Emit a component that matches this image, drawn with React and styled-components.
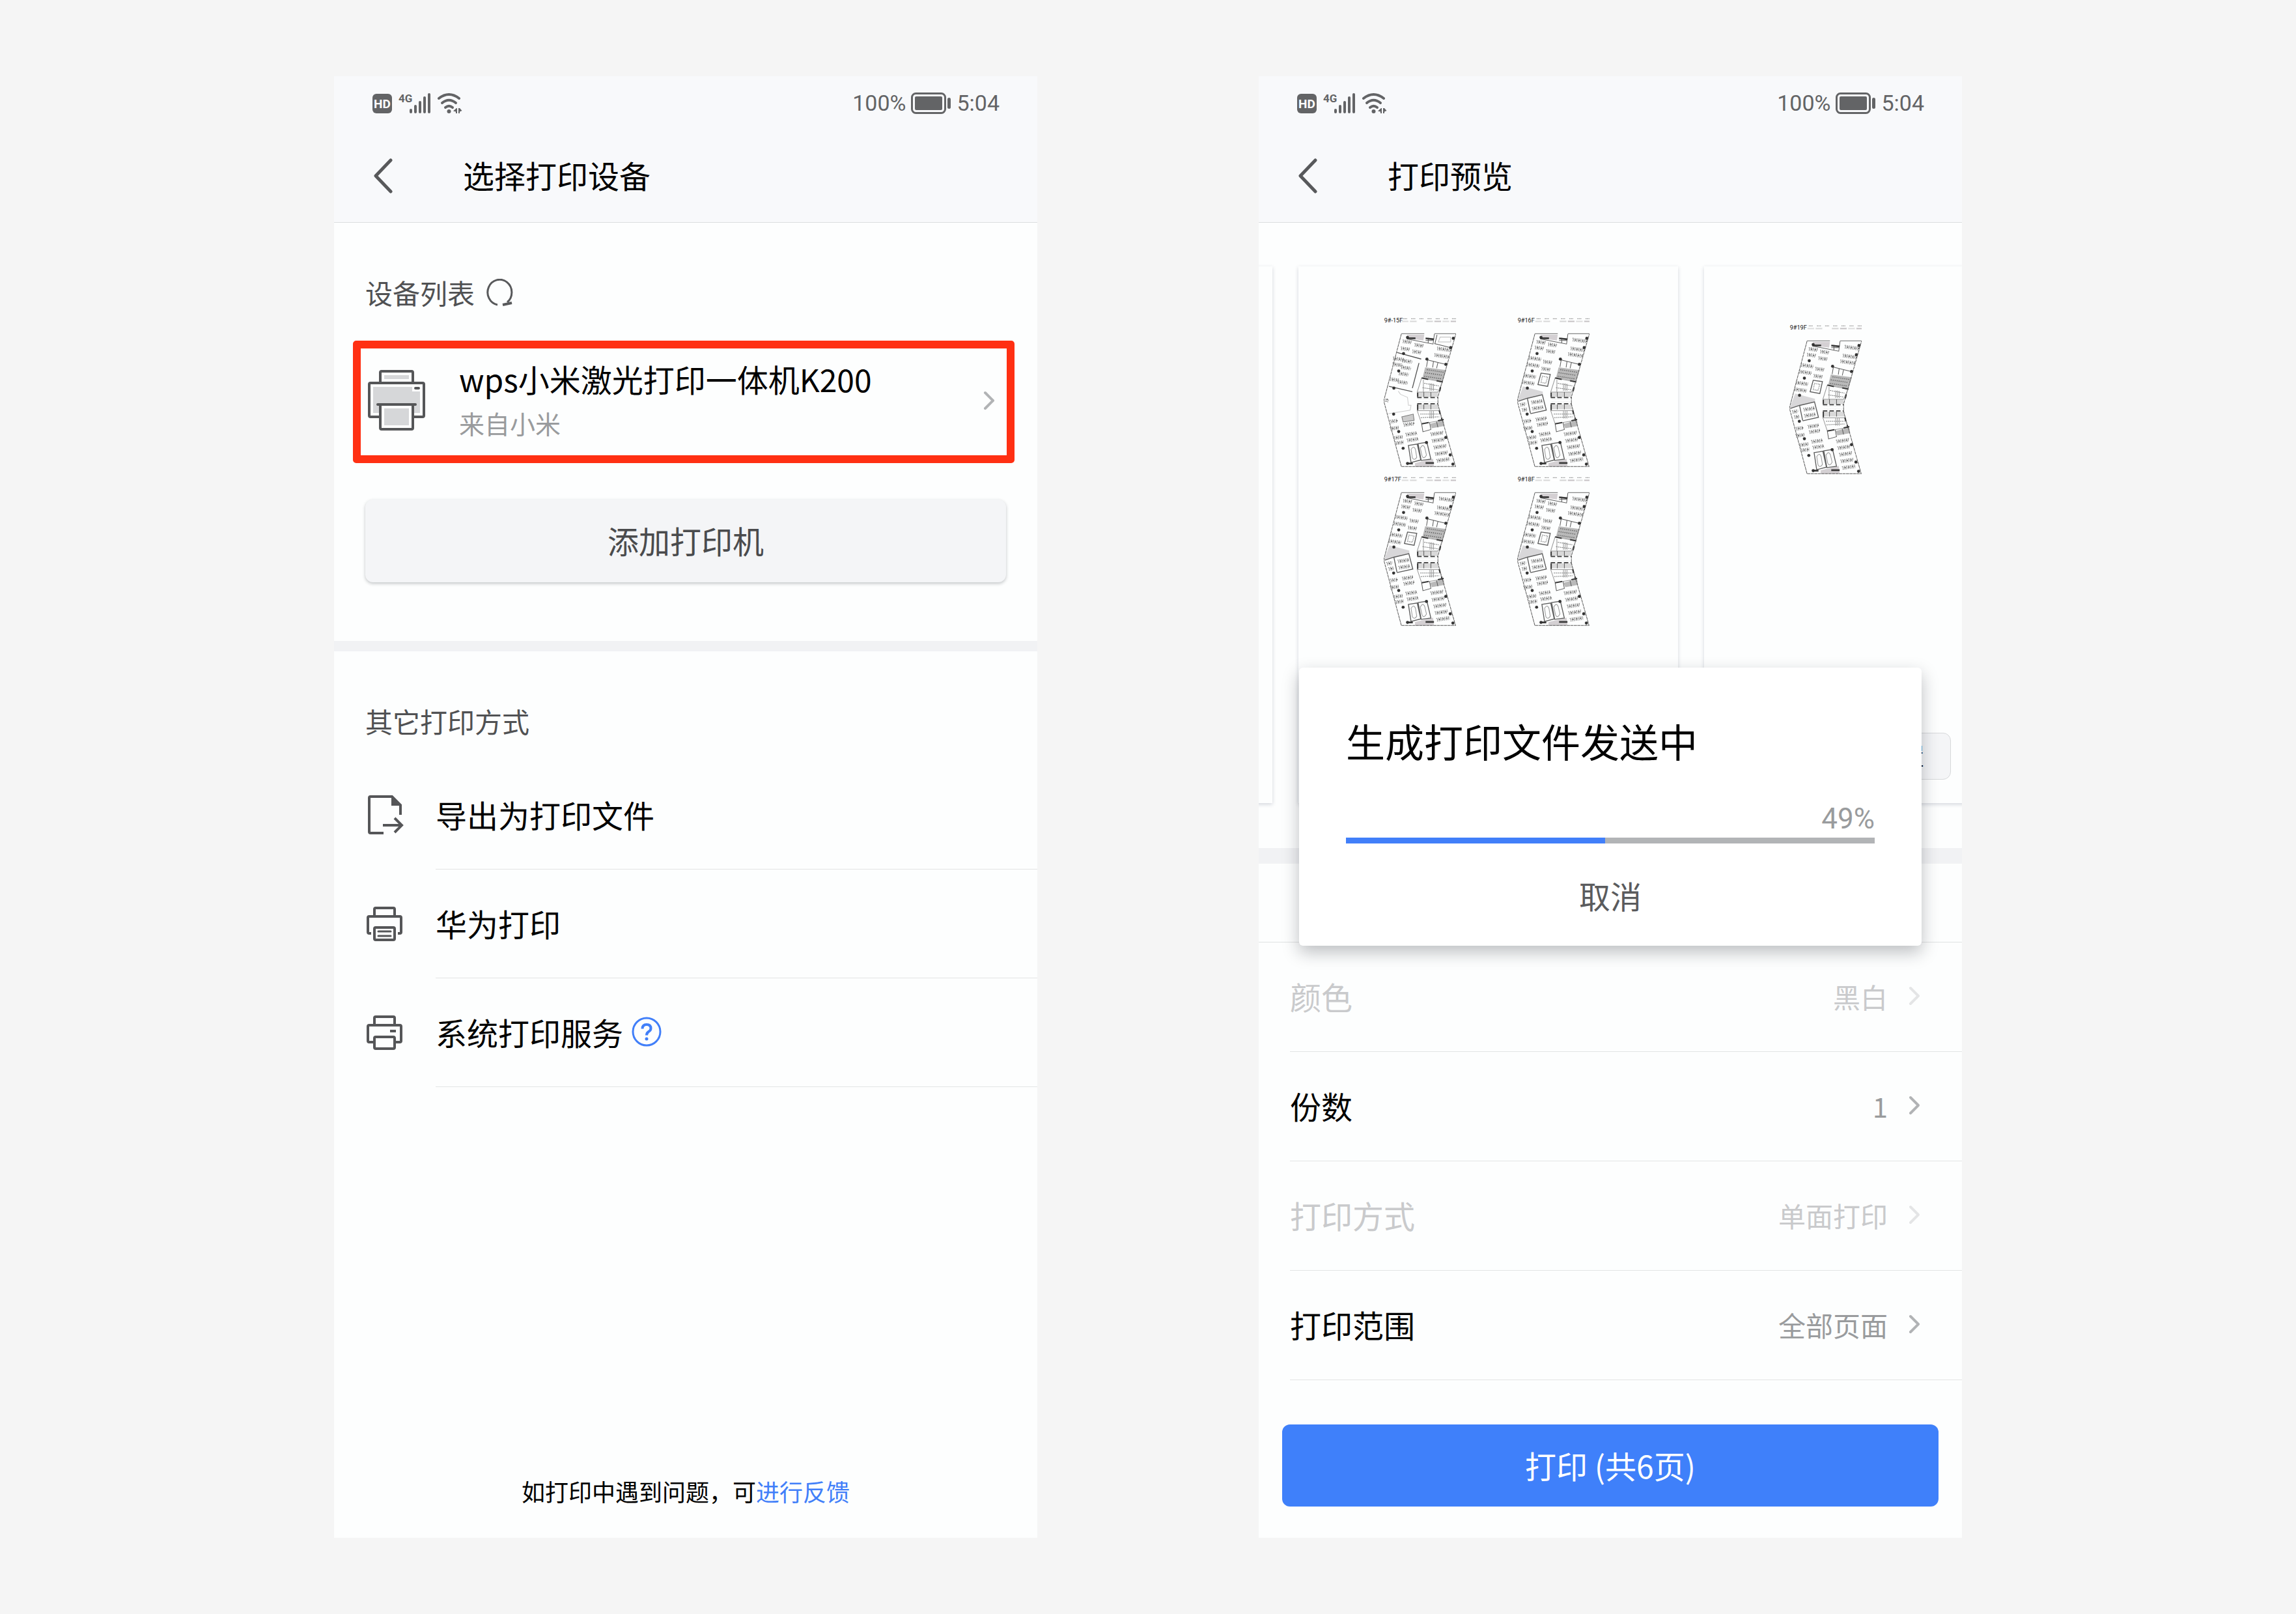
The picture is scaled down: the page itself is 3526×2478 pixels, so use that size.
import React from 'react';
import styled, { createGlobalStyle } from 'styled-components';

const GlobalStyle = createGlobalStyle`
  *, *::before, *::after {
    box-sizing: border-box;
  }

  body {
    margin: 0;
    background: #f5f5f5;
    color: #000;
    font-family: 'Noto Sans CJK SC', 'Noto Sans', sans-serif;
    font-size: 48px;
  }

  button {
    padding: 0;
    border: 0;
    background: none;
    font-family: inherit;
    cursor: pointer;
  }

  h1, h2, p, ul {
    margin: 0;
    padding: 0;
    font-weight: 400;
    list-style: none;
  }

  a {
    color: inherit;
    text-decoration: none;
  }

  svg {
    display: block;
    flex: none;
  }
`;

const Page = styled.div`
  display: flex;
  justify-content: center;
  gap: 340px;
  min-height: 100vh;
  padding: 117px 48px;
`;

const Phone = styled.section`
  position: relative;
  display: flex;
  flex: 1;
  flex-direction: column;
  min-width: 0;
  max-width: 1080px;
  background: #fdfefe;
`;

const Header = styled.header`
  border-bottom: 1px solid #dcdedf;
  background: #f8f9fb;
`;

const StatusBar = styled.div`
  display: flex;
  align-items: center;
  justify-content: space-between;
  height: 82px;
  padding: 0 58px;
  color: #636466;
  font-family: Roboto, sans-serif;
  font-size: 34px;
  line-height: 40px;
`;

const StatusGroup = styled.div`
  display: flex;
  align-items: center;
  gap: 8px;
`;

const TitleBar = styled.div`
  display: flex;
  align-items: center;
  height: 142px;
  padding: 0 48px;
`;

const BackButton = styled.button`
  display: flex;
  align-items: center;
  width: 150px;
  height: 96px;
  padding-left: 11px;
`;

const Title = styled.h1`
  padding-bottom: 4px;
  font-size: 48px;
  line-height: 68px;
`;

const SectionTitle = styled.h2`
  display: flex;
  align-items: center;
  gap: 18px;
  padding: 77px 48px 0;
  color: #505153;
  font-size: 42px;
  line-height: 60px;
`;

const DeviceCard = styled.a`
  display: flex;
  align-items: center;
  margin: 44px 35px 56px 29px;
  padding: 12px 18px 16px 11px;
  border: 12px solid #ff3013;
  border-radius: 5px;
`;

const DeviceText = styled.div`
  flex: 1;
  padding-left: 51px;
  line-height: 68px;
`;

const DeviceSource = styled.p`
  color: #999b9d;
  font-size: 39px;
`;

const AddButton = styled.button`
  height: 127px;
  margin: 0 48px 90px;
  padding-bottom: 4px;
  border-radius: 12px;
  background: #f4f5f7;
  box-shadow: 0 2px 5px rgba(40, 45, 55, 0.28);
  color: #4a4b4d;
  font-size: 48px;
`;

const Divider = styled.div`
  height: ${(props) => (props.$wide ? '24px' : '16px')};
  background: #f1f2f4;
`;

const MethodList = styled.ul`
  padding-top: 31px;
`;

const Method = styled.li`
  display: flex;
  align-items: center;
  padding-left: 48px;
`;

const MethodIcon = styled.div`
  width: 108px;
  padding-bottom: 2px;
`;

const MethodBody = styled.div`
  display: flex;
  flex: 1;
  align-items: center;
  gap: 13px;
  height: 167px;
  padding-bottom: 2px;
  border-bottom: 1px solid #e3e5e5;
`;

const Feedback = styled.p`
  margin-top: auto;
  padding-bottom: 48px;
  font-size: 36px;
  line-height: 48px;
  text-align: center;

  a {
    color: #417ff9;
  }
`;

const Preview = styled.div`
  position: relative;
  padding: 67px 0 69px;
`;

const PageStrip = styled.div`
  overflow: hidden;
  margin: -20px 0;
  padding: 20px 0;
`;

/* scrolled so the second sheet is in view */
const Sheets = styled.div`
  display: flex;
  gap: 40px;
  margin-left: -562px;
`;

const Sheet = styled.div`
  display: grid;
  flex: none;
  grid-template-columns: repeat(2, 111px);
  align-content: start;
  gap: 14px 94px;
  width: 583px;
  height: 824px;
  padding: ${(props) => (props.$short ? '89px' : '78px')} 0 0 131px;
  background: #fdfefe;
  box-shadow: 0 2px 6px rgba(40, 50, 80, 0.2);
`;

const SheetSetup = styled.button`
  position: absolute;
  right: 17px;
  bottom: 105px;
  height: 72px;
  padding: 0 40px 4px;
  border: 1px solid #d6d8da;
  border-radius: 12px;
  background: #f4f5f7;
  font-size: 36px;
`;

const SettingsHeading = styled.h2`
  height: 121px;
  padding: 30px 72px;
  border-bottom: 1px solid #e0e2e2;
  color: #505153;
  font-size: 42px;
  line-height: 60px;
`;

const Setting = styled.button`
  display: flex;
  align-items: center;
  width: calc(100% - 48px);
  height: 168px;
  margin-left: 48px;
  padding: 0 64px 3px 0;
  border-bottom: 1px solid #e3e5e5;
  color: #000;
  font-size: 48px;
  text-align: left;

  &:disabled {
    color: #c9cacc;
    cursor: default;
  }
`;

const SettingValue = styled.span`
  flex: 1;
  padding-right: 32px;
  color: ${(props) => (props.$muted ? '#c9cacc' : '#999b9d')};
  font-size: 42px;
  text-align: right;
`;

const PrintButton = styled.button`
  height: 126px;
  margin: auto 36px 48px;
  padding-bottom: 3px;
  border-radius: 12px;
  background: #3f80fa;
  color: #fff;
  font-size: 48px;
`;

const Dialog = styled.div`
  position: absolute;
  top: 908px;
  right: 62px;
  left: 62px;
  display: flex;
  flex-direction: column;
  padding: 72px 72px 30px;
  border-radius: 6px;
  background: #fff;
  box-shadow: 0 10px 26px rgba(20, 25, 35, 0.28);
`;

const DialogTitle = styled.h2`
  font-size: 60px;
  line-height: 80px;
`;

const Percent = styled.span`
  margin: 56px 0 5px;
  color: #999b9d;
  font-family: Roboto, sans-serif;
  font-size: 44px;
  line-height: 48px;
  text-align: right;
`;

const Track = styled.div`
  height: 9px;
  background: #b2b4b6;
`;

const Fill = styled.div`
  height: 100%;
  background: #417ff9;
`;

const CancelButton = styled.button`
  align-self: center;
  height: 96px;
  margin-top: 31px;
  padding: 0 48px;
  color: #5a5b5d;
  font-size: 48px;
`;

const HelpButton = styled.button`
  border-radius: 50%;
`;

const SignalIcons = () => (
  <svg width="140" height="34" viewBox="0 0 140 34" fill="#636466">
    <rect x="1" y="3" width="30" height="30" rx="6" />
    <text x="16" y="25" textAnchor="middle" fill="#fff" fontFamily="Roboto" fontWeight="700" fontSize="19">
      HD
    </text>
    <text x="41" y="16" fontFamily="Liberation Sans Narrow, Roboto" fontWeight="700" fontSize="17">
      4G
    </text>
    <rect x="58" y="26" width="4" height="7" rx="2" />
    <rect x="65" y="20" width="4" height="13" rx="2" />
    <rect x="72" y="14" width="4" height="19" rx="2" />
    <rect x="79" y="7" width="4" height="26" rx="2" />
    <rect x="86" y="2" width="4" height="31" rx="2" />
    <g fill="none" stroke="#636466" strokeWidth="4" strokeLinecap="round">
      <path d="M103 10 Q118.5 -2 134 10" />
      <path d="M108 17 Q118.5 8.5 129 17" />
      <path d="M113 24 Q118.5 19.5 124 24" />
    </g>
    <circle cx="118.5" cy="30" r="3" />
    <path d="M125 29.5 L130 25 H131 V33 H129 V30.5 Z M133 25 H135 L138.5 29 L135 30.5 V33 H133 Z" />
  </svg>
);

const Battery = () => (
  <svg width="62" height="34" viewBox="0 0 62 34" fill="#636466">
    <rect x="1.5" y="2.5" width="51" height="30" rx="6" fill="none" stroke="#636466" strokeWidth="3" />
    <rect x="6" y="7" width="42" height="21" rx="2" />
    <rect x="56" y="9" width="5" height="17" rx="2.5" />
  </svg>
);

const BackIcon = () => (
  <svg width="32" height="54" viewBox="0 0 32 54" fill="none" stroke="#58595b" strokeWidth="5">
    <path d="M28 3 L5 27 L28 51" strokeLinecap="round" strokeLinejoin="round" />
  </svg>
);

const Chevron = ({ color = '#b1b3b5' }) => (
  <svg width="18" height="30" viewBox="0 0 18 30" fill="none" stroke={color} strokeWidth="4">
    <path d="M3 3 L15 15 L3 27" strokeLinecap="round" strokeLinejoin="round" />
  </svg>
);

const RefreshIcon = () => (
  <svg width="42" height="42" viewBox="0 0 42 42" fill="none" stroke="#58595b" strokeWidth="3">
    <path d="M17 40 A18.5 19.5 0 1 1 32 36" />
    <path d="M25 40 L39 37" strokeWidth="4" />
  </svg>
);

const DeviceIcon = () => (
  <svg width="89" height="94" viewBox="0 0 89 94" fill="#d6d7d9">
    <path d="M25 8h38v6H25z" />
    <path d="M8 26h60v7h12v33H8z" />
    <g stroke="#555658" strokeWidth="4" strokeLinejoin="round" strokeLinecap="round">
      <path d="M19 20 V4 Q19 2 21 2 H67 Q69 2 69 4 V20" fill="none" />
      <path d="M19 72 H4 Q2 72 2 70 V22 Q2 20 4 20 H84 Q86 20 86 22 V70 Q86 72 84 72 H69" fill="none" />
      <path d="M19 53 V89 Q19 91 21 91 H67 Q69 91 69 89 V53" fill="#fff" />
      <path d="M15 53 H73" />
      <path d="M73 28 H78" />
    </g>
    <path d="M25 59h38v26H25z" />
  </svg>
);

const ExportIcon = () => (
  <svg width="60" height="62" viewBox="0 0 60 62" fill="none" stroke="#555658" strokeWidth="4">
    <path d="M28 59 H8 Q6 59 6 57 V5 Q6 3 8 3 H41 L54 16 V31" />
    <path d="M40 3 V17 H54 Z" fill="#555658" stroke="none" />
    <path d="M27 47 H56 M45 36 L56 47 L45 58" />
  </svg>
);

const PrinterIcon = ({ loaded }) => (
  <svg width="60" height="54" viewBox="0 0 60 54" fill="none" stroke="#555658" strokeWidth="4">
    <path d="M14 15 V5 Q14 3 16 3 H43 Q45 3 45 5 V15" />
    {loaded ? (
      <>
        <path d="M9 42 H6 Q4 42 4 40 V18 Q4 16 6 16 H53 Q55 16 55 18 V40 Q55 42 53 42 H50" />
        <rect x="14" y="33" width="31" height="19" rx="2" />
        <path d="M20 39 H39 M20 46 H39" strokeWidth="3" strokeLinecap="round" />
      </>
    ) : (
      <>
        <path d="M14 42 H6 Q4 42 4 40 V18 Q4 16 6 16 H53 Q55 16 55 18 V40 Q55 42 53 42 H45" />
        <rect x="14" y="34" width="31" height="18" rx="2" />
        <path d="M38 25 H47" />
      </>
    )}
  </svg>
);

const HelpIcon = () => (
  <svg width="46" height="46" viewBox="0 0 46 46" fill="none" stroke="#417ff9" strokeWidth="3">
    <circle cx="23" cy="23" r="21" />
    <path d="M16.5 18.5 Q16.5 12 23 12 Q29.5 12 29.5 18 Q29.5 21 26 23 Q23 25 23 28.5" strokeWidth="4" />
    <circle cx="23" cy="34" r="2.5" fill="#417ff9" stroke="none" />
  </svg>
);

// desk clusters as [centre x, centre y, width, tilt]
const commonDesks = [
  [48, 504, 40, -8], [114, 486, 50, -8], [66, 546, 40, -8], [126, 530, 54, -8],
  [132, 556, 54, -8], [72, 570, 38, -8], [242, 528, 60, -8], [248, 558, 60, -8],
  [256, 588, 60, -8], [262, 618, 60, -8], [270, 648, 62, -8], [46, 472, 34, -8],
];
const openDesks = [
  [108, 114, 42, 8], [160, 126, 42, 8], [100, 140, 42, 8], [152, 156, 42, 8],
  [80, 188, 56, 8], [138, 204, 42, 8], [72, 218, 56, 8], [130, 236, 42, 8],
  [56, 268, 56, 8], [50, 298, 56, 8], [284, 106, 68, 8], [274, 146, 66, 8],
  [264, 172, 68, 8], [90, 384, 54, -8], [94, 412, 54, -8], [108, 462, 50, -8],
  [26, 396, 28, -8], [34, 420, 26, -8],
];
const hallDesks = [
  [106, 112, 42, 8], [160, 128, 42, 8], [98, 144, 42, 8], [150, 158, 42, 8],
  [274, 146, 66, 8], [262, 176, 66, 8], [66, 190, 50, 8], [106, 200, 46, 8],
  [62, 216, 46, 8], [100, 230, 46, 8], [90, 258, 46, 8], [48, 284, 40, 8],
  [86, 296, 46, 8], [14, 378, 16, -70],
];
const columns = [
  [316, 96], [304, 138], [282, 214], [90, 165], [68, 244], [46, 322], [68, 519],
  [196, 190], [108, 92], [282, 546], [302, 625], [314, 667], [194, 569], [45, 440], [88, 595], [108, 664],
];

const Desk = ({ x, y, w, tilt }) => (
  <g transform={`translate(${x} ${y}) rotate(${tilt})`} stroke="#858585" strokeWidth="4" fill="none">
    <path d={`M${-w / 2} -6 H${w / 2}`} strokeDasharray="5 4" />
    <path d={`M${-w / 2 + 3} 0 H${w / 2}`} stroke="#555" strokeDasharray="3 4 7 3" strokeWidth="5" />
    <path d={`M${-w / 2 + 2} 6 H${w / 2 - 2}`} strokeDasharray="4 4" />
  </g>
);

const FloorPlan = ({ name, hall }) => (
  <svg width="111" height="230" viewBox="0 0 328 680" role="img" aria-label={name}>
    <text x="2" y="24" fontFamily="Liberation Sans Narrow, Roboto" fontSize="27" fill="#111">
      {name}
    </text>
    {['#ddd', '#d8d8d8', '#fff', '#d4d4d4', '#c6c2c5', '#ddd', '#c6c2c5'].map((fill, i) => (
      <g key={i}>
        <rect x={82 + i * 37} y="16" width="30" height="6" fill={fill} />
        <path d={`M${88 + i * 37} 7 h18`} stroke="#999" strokeWidth="4" strokeDasharray="5 2" />
      </g>
    ))}

    <path d="M106 80 H184 L180 106 L106 96 Z M142 662 L224 642 L228 678 H142 Z" fill="#d4d0d3" />
    <path d="M188 228 L284 240 L268 292 L176 276 Z M210 484 L272 468 L276 494 L218 504 Z" fill="#b9b9b9" />
    <path d="M152 340 H246 V362 H152 Z M152 396 H250 V418 H152 Z" fill="#d9d9d9" />
    {!hall && <path d="M26 314 L116 338 L116 352 L2 380 Z" fill="#d8d7d9" />}

    <g fill="none" stroke="#5c5c5c" strokeWidth="3">
      <path d="M80 76 L0 380 L80 678 H326 L246 396 V362 L328 74" strokeDasharray="14 2" />
      <path d="M80 75 H184 M230 75 H328" stroke="#888" strokeWidth="4" />
      <path d="M230 76 L224 122 L104 98 M190 106 H226 M202 94 V116" />
      <path d="M192 192 L282 214 M200 192 L194 226 M226 200 L222 228 M246 206 L240 232" />
      <path d="M152 340 L172 276 L266 294 L246 340 Z M180 284 V340 M152 424 L172 484 L266 468 L250 424 Z" stroke="#999" />
      <path d="M172 484 L178 520 L214 510 L208 478 M240 474 L246 500" />
      <path d="M112 582 L152 576 L168 648 L124 660 Z M156 574 L196 568 L214 644 L170 650 Z" strokeWidth="4" />
      <path d="M124 600 Q136 580 144 600 L150 636 Q138 654 130 638 Z M166 594 Q178 572 186 592 L194 626 Q182 648 174 630 Z" stroke="#999" />
      <path d="M182 340 V362 M214 340 V362 M182 396 V418 M214 396 V418" />
    </g>
    <g stroke="#3a3a3a" fill="none" strokeWidth="6">
      <path d="M106 96 H144 M190 96 L228 100 M106 664 H132 M190 662 H228" strokeWidth="8" />
      <path d="M154 342 V362 M154 396 V422 M172 276 L202 282 M240 288 L268 294 M172 484 L204 478 M246 470 L272 464" />
      <path d="M152 365 H246 M152 393 H246" strokeWidth="5" strokeDasharray="20 10" />
      <path d="M258 318 L254 336 M252 422 L256 440 M262 456 L266 470" />
    </g>
    <g stroke="#777" strokeWidth="3" fill="none">
      <path d="M196 238 L272 250 M188 252 L268 264 M184 268 L264 280" stroke="#555" strokeWidth="4" strokeDasharray="4 5" />
      <path d="M184 300 L250 312 M176 320 L246 330 M166 440 H250 M168 456 L252 452" strokeDasharray="6 3" />
      <path d="M210 300 V334 M218 300 V334 M226 302 V334 M210 424 V460 M218 424 V460 M226 424 V460" stroke="#999" />
      <path d="M158 372 H244 M158 384 H244" stroke="#ddd" strokeDasharray="3 4" />
    </g>

    {hall ? (
      <g fill="none" stroke="#555" strokeWidth="4">
        <path d="M60 160 L170 190 M160 208 L130 322 M24 314 L130 338" />
        <path d="M230 120 L304 138 M232 122 L242 80" strokeWidth="3" />
        <path d="M256 90 H304 V112 H248 Z" stroke="#bbb" strokeWidth="3" />
        <path d="M20 438 L120 422 L124 400 L112 400 L108 364 L76 350 L66 336" stroke="#ccc" strokeWidth="3" />
        <path d="M82 452 L134 440 L138 468 L88 476 Z" fill="#ccc" stroke="#777" strokeWidth="3" />
      </g>
    ) : (
      <g fill="none" stroke="#5c5c5c" strokeWidth="4">
        <path d="M108 254 L150 260 L138 314 L94 306 Z" />
        <path d="M114 268 L138 272 L130 300 L108 296 Z" stroke="#999" strokeDasharray="5 3" />
        <path d="M4 382 L46 368 L60 436 M46 368 L114 352 L132 422 L60 438" />
      </g>
    )}

    {[...commonDesks, ...(hall ? hallDesks : openDesks)].map(([x, y, w, tilt]) => (
      <Desk key={`${x}-${y}`} x={x} y={y} w={w} tilt={tilt} />
    ))}
    {columns.map(([x, y]) => (
      <circle key={`${x}-${y}`} cx={x} cy={y} r="7" fill="#333" />
    ))}
  </svg>
);

const PhoneHeader = ({ title }) => (
  <Header>
    <StatusBar>
      <SignalIcons />
      <StatusGroup>
        <span>100%</span>
        <Battery />
        <span>5:04</span>
      </StatusGroup>
    </StatusBar>
    <TitleBar>
      <BackButton aria-label="返回">
        <BackIcon />
      </BackButton>
      <Title>{title}</Title>
    </TitleBar>
  </Header>
);

const methods = [
  { label: '导出为打印文件', icon: <ExportIcon /> },
  { label: '华为打印', icon: <PrinterIcon loaded /> },
  { label: '系统打印服务', icon: <PrinterIcon />, help: true },
];

const settings = [
  { label: '颜色', value: '黑白', disabled: true },
  { label: '份数', value: '1' },
  { label: '打印方式', value: '单面打印', disabled: true },
  { label: '打印范围', value: '全部页面' },
];

const DeviceScreen = () => (
  <Phone>
    <PhoneHeader title="选择打印设备" />
    <SectionTitle>
      设备列表
      <button type="button" aria-label="刷新">
        <RefreshIcon />
      </button>
    </SectionTitle>
    <DeviceCard href="#device">
      <DeviceIcon />
      <DeviceText>
        <p>wps小米激光打印一体机K200</p>
        <DeviceSource>来自小米</DeviceSource>
      </DeviceText>
      <Chevron />
    </DeviceCard>
    <AddButton type="button">添加打印机</AddButton>
    <Divider />
    <SectionTitle>其它打印方式</SectionTitle>
    <MethodList>
      {methods.map(({ label, icon, help }) => (
        <Method key={label}>
          <MethodIcon>{icon}</MethodIcon>
          <MethodBody>
            <a href="#method">{label}</a>
            {help && (
              <HelpButton type="button" aria-label="帮助">
                <HelpIcon />
              </HelpButton>
            )}
          </MethodBody>
        </Method>
      ))}
    </MethodList>
    <Feedback>
      如打印中遇到问题，可<a href="#feedback">进行反馈</a>
    </Feedback>
  </Phone>
);

const PreviewScreen = ({ progress }) => (
  <Phone>
    <PhoneHeader title="打印预览" />
    <Preview>
      <PageStrip>
        <Sheets>
          <Sheet />
          <Sheet>
            <FloorPlan name="9#-15F" hall />
            <FloorPlan name="9#16F" />
            <FloorPlan name="9#17F" />
            <FloorPlan name="9#18F" />
          </Sheet>
          <Sheet $short>
            <FloorPlan name="9#19F" />
          </Sheet>
        </Sheets>
      </PageStrip>
      <SheetSetup type="button">设置</SheetSetup>
    </Preview>
    <Divider $wide />
    <SettingsHeading>打印设置</SettingsHeading>
    {settings.map(({ label, value, disabled }) => (
      <Setting key={label} type="button" disabled={disabled}>
        {label}
        <SettingValue $muted={disabled}>{value}</SettingValue>
        <Chevron color={disabled ? '#e4e5e6' : undefined} />
      </Setting>
    ))}
    <PrintButton type="button">打印 (共6页)</PrintButton>
    <Dialog role="dialog" aria-labelledby="sending">
      <DialogTitle id="sending">生成打印文件发送中</DialogTitle>
      <Percent>{progress}%</Percent>
      <Track role="progressbar" aria-valuenow={progress} aria-labelledby="sending">
        <Fill style={{ width: `${progress}%` }} />
      </Track>
      <CancelButton type="button">取消</CancelButton>
    </Dialog>
  </Phone>
);

const App = () => (
  <>
    <GlobalStyle />
    <Page>
      <DeviceScreen />
      <PreviewScreen progress={49} />
    </Page>
  </>
);

export default App;
